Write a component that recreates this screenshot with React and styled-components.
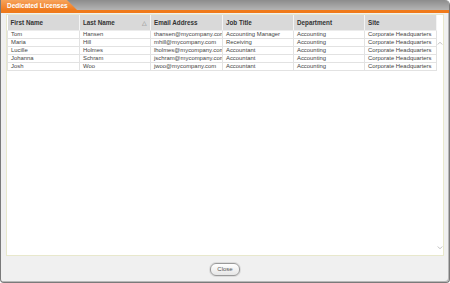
import React from 'react'
import styled, { createGlobalStyle } from 'styled-components'

const Global = createGlobalStyle`
html, body { margin:0; padding:0; background:#fff; }
body { font-family:"Liberation Sans", Arial, sans-serif; }
`

const columns = [
    { key: 'first', label: 'First Name', width: 72 },
    { key: 'last', label: 'Last Name', width: 71, sorted: true },
    { key: 'email', label: 'Email Address', width: 72 },
    { key: 'job', label: 'Job Title', width: 71 },
    { key: 'dept', label: 'Department', width: 71 },
    { key: 'site', label: 'Site', width: 72 },
]

const people = [
    { first: 'Tom', last: 'Hansen', email: 'thansen@mycompany.com', job: 'Accounting Manager', dept: 'Accounting', site: 'Corporate Headquarters' },
    { first: 'Maria', last: 'Hill', email: 'mhill@mycompany.com', job: 'Receiving', dept: 'Accounting', site: 'Corporate Headquarters' },
    { first: 'Lucille', last: 'Holmes', email: 'lholmes@mycompany.com', job: 'Accountant', dept: 'Accounting', site: 'Corporate Headquarters' },
    { first: 'Johanna', last: 'Schram', email: 'jschram@mycompany.com', job: 'Accountant', dept: 'Accounting', site: 'Corporate Headquarters' },
    { first: 'Josh', last: 'Woo', email: 'jwoo@mycompany.com', job: 'Accountant', dept: 'Accounting', site: 'Corporate Headquarters' },
]

export default function App() {
    return (
        <>
            <Global />
            <Window>
                <TitleBar>
                    <Tab>Dedicated Licenses</Tab>
                </TitleBar>
                <OrangeRule />
                <Body>
                    <Panel>
                        <Grid>
                            <Table>
                                <colgroup>
                                    {columns.map(c => <col key={c.key} style={{ width: c.width }} />)}
                                </colgroup>
                                <thead>
                                    <tr>
                                        {columns.map(c => (
                                            <Th key={c.key}>
                                                {c.label}
                                                {c.sorted && <SortMark>&#9651;</SortMark>}
                                            </Th>
                                        ))}
                                    </tr>
                                </thead>
                                <tbody>
                                    {people.map(p => (
                                        <tr key={p.email}>
                                            {columns.map(c => <Td key={c.key}>{p[c.key]}</Td>)}
                                        </tr>
                                    ))}
                                </tbody>
                            </Table>
                        </Grid>
                        <Scrollbar>
                            <Arrow viewBox="0 0 8 5"><polyline points="1,4.5 4,1.5 7,4.5" /></Arrow>
                            <Arrow viewBox="0 0 8 5"><polyline points="1,0.5 4,3.5 7,0.5" /></Arrow>
                        </Scrollbar>
                    </Panel>
                </Body>
                <Footer>
                    <CloseButton>Close</CloseButton>
                </Footer>
            </Window>
        </>
    )
}

const Window = styled.div`
width:450px;
height:283px;
box-sizing:border-box;
display:flex;
flex-direction:column;
background:#f0f0f0;
border:1px solid #7a7a7a;
border-top:none;
border-radius:0 5px 4px 4px;
overflow:hidden;
box-shadow:inset -1px -1px 0 #b8b8b8;
`

const TitleBar = styled.div`
height:10px;
display:flex;
background:linear-gradient(#8c8c8c, #b4b4b4);
`

const Tab = styled.div`
height:10px;
width:66px;
padding-left:6px;
padding-right:4px;
color:#fff;
font-weight:bold;
font-size:6.5px;
line-height:11px;
white-space:nowrap;
background:linear-gradient(#f6a35c, #f07a1e);
clip-path:polygon(0 0, 66px 0, 76px 100%, 0 100%);
`

const OrangeRule = styled.div`
height:3px;
background:#f07a1a;
`

const Body = styled.div`
flex:1;
padding:1px 5px 0 5px;
display:flex;
`

const Panel = styled.div`
width:438px;
height:242px;
box-sizing:border-box;
background:#fff;
border:1px solid #e8e8cc;
display:flex;
`

const Grid = styled.div`
width:429px;
`

const Table = styled.table`
border-collapse:collapse;
table-layout:fixed;
width:429px;
font-size:5.9px;
color:#444;
`

const Th = styled.th`
position:relative;
height:15px;
padding:0 0 0 3px;
text-align:left;
font-weight:bold;
font-size:6.3px;
color:#333;
background:#d9d9d9;
border-right:1px solid #f4f4f4;
border-bottom:1px solid #ececec;
white-space:nowrap;
`

const SortMark = styled.span`
position:absolute;
right:3px;
top:4px;
font-size:6px;
color:#777;
font-weight:normal;
`

const Td = styled.td`
height:7px;
padding:0 0 0 3px;
line-height:7px;
border:1px solid #e2e2e2;
border-top:none;
white-space:nowrap;
overflow:hidden;
`

const Scrollbar = styled.div`
flex:1;
display:flex;
flex-direction:column;
justify-content:space-between;
align-items:center;
padding:26px 0 5px;
`

const Arrow = styled.svg`
width:6px;
height:4px;
flex:none;
fill:none;
stroke:#aaa;
stroke-width:1;
`

const Footer = styled.div`
height:26px;
display:flex;
align-items:center;
justify-content:center;
`

const CloseButton = styled.button`
width:30px;
height:13px;
padding:0;
font-family:"Liberation Sans", Arial, sans-serif;
font-size:6px;
color:#555;
border:1px solid #9a9a9a;
border-radius:6px;
background:linear-gradient(#ffffff, #e6e6e6);
box-shadow:0 0 0 1px #dcdcdc;
`
